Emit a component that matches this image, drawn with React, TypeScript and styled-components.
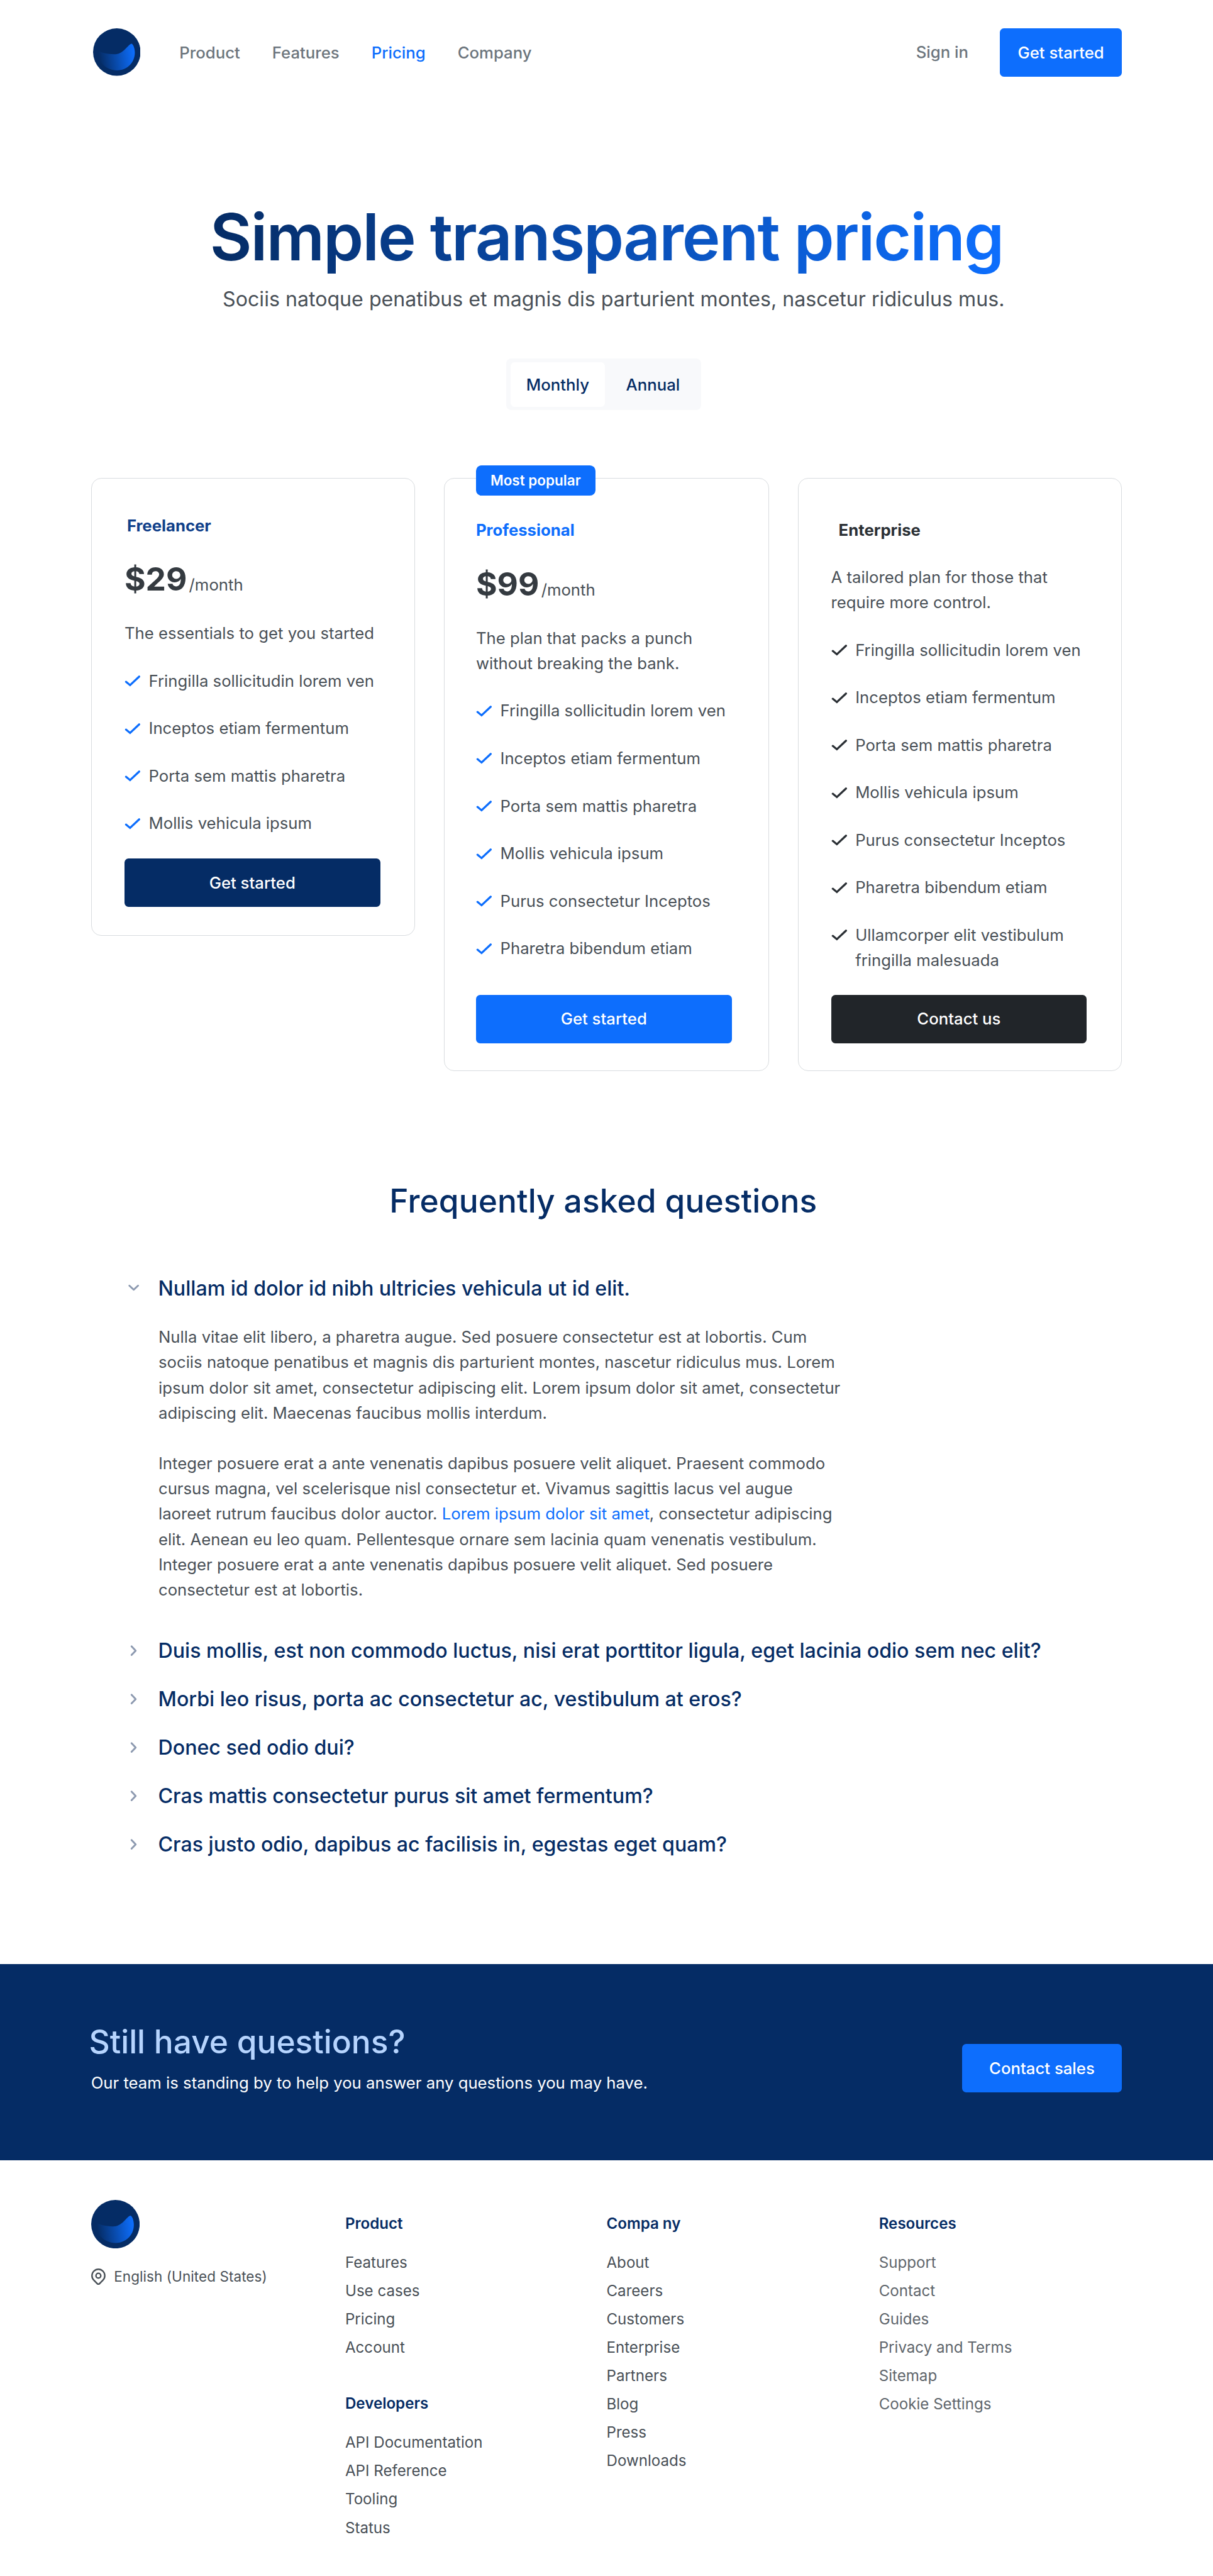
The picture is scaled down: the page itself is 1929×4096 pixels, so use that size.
import React, { useId, useState } from 'react';
import styled, { createGlobalStyle, css } from 'styled-components';

const color = {
  navy: '#052c65',
  navySoft: '#10408a',
  blue: '#0d6efd',
  sky: '#b6d4fe',
  ink: '#212529',
  graphite: '#343a40',
  text: '#495057',
  nav: '#6c757d',
  faint: '#60666c',
  chevron: '#8d9ab0',
  line: '#d9dcdf',
  pale: '#f8f9fb',
  white: '#ffffff',
};

const GlobalStyle = createGlobalStyle`
  *, *::before, *::after { box-sizing: border-box; }
  html { font-size: 8.0375px; }
  body {
    margin: 0;
    background: ${color.white};
    color: ${color.text};
    font-family: Inter, "Liberation Sans", sans-serif;
    font-size: 3.2rem;
    line-height: 5rem;
  }
  h1, h2, h3, p, ul { margin: 0; padding: 0; font-weight: 400; }
  ul { list-style: none; }
  a { color: inherit; text-decoration: none; }
  button { font: inherit; border: 0; padding: 0; margin: 0; background: none; color: inherit; cursor: pointer; }
  svg { display: block; flex: none; }
`;

const Page = styled.div`
  width: 240rem;
  min-height: 509.6rem;
  display: flex;
  flex-direction: column;
`;

/* ---------- shared ---------- */

type Tone = 'blue' | 'navy' | 'dark';

const toneColor: Record<Tone, string> = {
  blue: color.blue,
  navy: color.navy,
  dark: color.ink,
};

const Button = styled.a<{ $tone?: Tone; $width: string }>`
  display: flex;
  align-items: center;
  justify-content: center;
  flex: none;
  width: ${(p) => p.$width};
  height: 9.6rem;
  padding-top: 0.1rem;
  border-radius: 0.8rem;
  background: ${(p) => toneColor[p.$tone ?? 'blue']};
  color: ${color.white};
  font-weight: 500;
  white-space: nowrap;
`;

const LogoSvg = styled.svg<{ $size: string }>`
  width: ${(p) => p.$size};
  height: ${(p) => p.$size};
`;

function Logo({ size }: { size: string }) {
  const id = useId();
  return (
    <LogoSvg $size={size} viewBox="42 48 282 282" aria-label="Home">
      <defs>
        <linearGradient id={id} gradientUnits="userSpaceOnUse" x1="78" y1="222" x2="286" y2="192">
          <stop offset="0" stopColor={color.navy} />
          <stop offset="1" stopColor={color.blue} />
        </linearGradient>
      </defs>
      <circle cx="183" cy="189" r="141" fill={color.navy} />
      <path
        fill={`url(#${id})`}
        d="M64 180 C90 192 125 202 168 202 C222 202 240 154 267 140 C279 137 290 166 290 192 C290 252 244 298 184 298 C120 298 68 250 64 180 Z"
      />
    </LogoSvg>
  );
}

/* ---------- header ---------- */

const Header = styled.header`
  display: flex;
  align-items: flex-start;
  padding: 5.6rem 18rem 5.6rem 18.4rem;
  height: 20.8rem;
`;

const Nav = styled.nav`
  display: flex;
  align-items: center;
  gap: 6.35rem;
  height: 9.6rem;
  margin-left: 7.7rem;
  padding-top: 0.15rem;
`;

const NavLink = styled.a<{ $active?: boolean }>`
  font-weight: 500;
  color: ${(p) => (p.$active ? color.blue : color.nav)};
`;

const Account = styled.div`
  display: flex;
  align-items: center;
  gap: 6.2rem;
  margin-left: auto;
`;

/* ---------- hero ---------- */

const Hero = styled.section`
  display: flex;
  flex-direction: column;
  align-items: center;
  padding-top: 18.6rem;
`;

const HeroTitle = styled.h1`
  font-size: 12.8rem;
  line-height: 15rem;
  font-weight: 600;
  letter-spacing: -0.02em;
  white-space: nowrap;
  background: linear-gradient(90deg, ${color.navy}, ${color.blue});
  -webkit-background-clip: text;
  background-clip: text;
  color: transparent;
`;

const HeroText = styled.p`
  margin-top: 1.9rem;
  padding-left: 2.8rem;
  font-size: 4rem;
  line-height: 6rem;
  white-space: nowrap;
`;

const Toggle = styled.div`
  display: flex;
  width: 38.6rem;
  height: 10.2rem;
  margin: 8.6rem 1.2rem 0 0;
  padding: 0.8rem 0 0.6rem 0.9rem;
  border-radius: 1rem;
  background: ${color.pale};
`;

const ToggleOption = styled.button<{ $on: boolean; $width: string }>`
  width: ${(p) => p.$width};
  height: 8.8rem;
  border-radius: 0.8rem;
  background: ${(p) => (p.$on ? color.white : 'transparent')};
  color: ${color.navy};
  font-weight: 500;
`;

/* ---------- plans ---------- */

const Plans = styled.section`
  display: flex;
  align-items: flex-start;
  justify-content: space-between;
  padding: 13.5rem 18rem 0;
`;

const Card = styled.article<{ $tall?: boolean; $wide?: boolean }>`
  position: relative;
  display: flex;
  flex-direction: column;
  width: ${(p) => (p.$wide ? '64.3rem' : '64.1rem')};
  height: ${(p) => (p.$tall ? '117.3rem' : '90.6rem')};
  padding: ${(p) => (p.$tall ? '7.7rem 0 5.4rem' : '6.75rem 0 5.6rem')};
  padding-left: ${(p) => (p.$wide ? '6.2rem' : p.$tall ? '6.4rem' : '6.5rem')};
  border: 0.18rem solid ${color.line};
  border-radius: 2rem;
`;

const Badge = styled.span`
  position: absolute;
  top: -2.7rem;
  left: 6.2rem;
  display: flex;
  align-items: center;
  justify-content: center;
  width: 23.6rem;
  height: 6rem;
  border-radius: 1.1rem;
  background: ${color.blue};
  color: ${color.white};
  font-size: 2.8rem;
  font-weight: 600;
`;

const PlanName = styled.h3<{ $color: string; $indent?: string }>`
  padding-left: ${(p) => p.$indent ?? '0'};
  color: ${(p) => p.$color};
  font-weight: 700;
  font-size: 3.2rem;
  line-height: 5rem;
`;

const Price = styled.div`
  display: flex;
  align-items: baseline;
  gap: 0.4rem;
  height: 8rem;
  margin-top: 4.05rem;
`;

const Amount = styled.strong`
  color: ${color.graphite};
  font-size: 6.4rem;
  line-height: 8rem;
  font-weight: 700;
`;

const PlanText = styled.p`
  width: 50.6rem;
  margin-top: 4.3rem;
`;

const FeatureList = styled.ul`
  display: flex;
  flex-direction: column;
  gap: 4.4rem;
  width: 50.6rem;
  margin-top: 4.4rem;
`;

const Feature = styled.li`
  display: flex;
  align-items: flex-start;
  gap: 1.6rem;
`;

const CheckSvg = styled.svg<{ $color: string }>`
  width: 3.2rem;
  height: 2.4rem;
  margin-top: 1.3rem;
  fill: none;
  stroke: ${(p) => p.$color};
  stroke-width: 4;
  stroke-linecap: round;
  stroke-linejoin: miter;
`;

const CardAction = styled.div`
  margin-top: auto;
`;

/* ---------- faq ---------- */

const Faq = styled.section`
  display: flex;
  flex-direction: column;
  padding: 21.6rem 0 21.1rem;
`;

const FaqTitle = styled.h2`
  padding-right: 1.3rem;
  text-align: center;
  color: ${color.navy};
  font-size: 6.4rem;
  line-height: 8rem;
  font-weight: 500;
  letter-spacing: 0.002em;
`;

const Questions = styled.div`
  display: flex;
  flex-direction: column;
  gap: 4.6rem;
  margin-top: 10.9rem;
  padding-left: 25.2rem;
`;

const Question = styled.button`
  display: flex;
  align-items: center;
  gap: 3.7rem;
  color: ${color.navy};
  font-size: 4rem;
  line-height: 5rem;
  font-weight: 500;
  text-align: left;
  white-space: nowrap;
`;

const ChevronSvg = styled.svg<{ $open: boolean }>`
  width: 2.4rem;
  height: 2.4rem;
  margin-bottom: 0.2rem;
  fill: none;
  stroke: ${color.chevron};
  stroke-width: 3.6;
  stroke-linecap: round;
  stroke-linejoin: round;
  ${(p) =>
    p.$open &&
    css`
      transform: rotate(90deg);
    `}
`;

const Answer = styled.div`
  display: flex;
  flex-direction: column;
  gap: 5rem;
  width: 136.5rem;
  margin: 4.65rem 0 2.45rem 6.15rem;
`;

const InlineLink = styled.a`
  color: ${color.blue};
`;

/* ---------- call to action ---------- */

const Cta = styled.section`
  display: flex;
  justify-content: space-between;
  align-items: flex-start;
  height: 38.8rem;
  padding: 11.25rem 18.1rem 0 17.6rem;
  background: ${color.navy};
`;

const CtaTitle = styled.h2`
  color: ${color.sky};
  font-size: 6.4rem;
  line-height: 8rem;
  font-weight: 500;
`;

const CtaText = styled.p`
  margin-top: 1.8rem;
  padding-left: 0.4rem;
  color: ${color.white};
`;

const CtaAction = styled.div`
  margin-top: 4.55rem;
`;

/* ---------- footer ---------- */

const Footer = styled.footer`
  display: grid;
  grid-template-columns: 50.3rem 51.7rem 53.9rem 1fr;
  padding: 7.8rem 18rem 0;
  font-size: 3rem;
`;

const Brand = styled.div`
  display: flex;
  flex-direction: column;
`;

const Locale = styled.div`
  display: flex;
  align-items: center;
  gap: 1.7rem;
  height: 5rem;
  margin-top: 3.15rem;
  font-size: 2.8rem;
  letter-spacing: 0.003em;
`;

const PinSvg = styled.svg`
  width: 2.85rem;
  height: 3.25rem;
  fill: none;
  stroke: ${color.text};
  stroke-width: 1.9;
  stroke-linecap: round;
  stroke-linejoin: round;
`;

const FooterColumn = styled.div<{ $faint?: boolean }>`
  display: flex;
  flex-direction: column;
  gap: 5.8rem;
  margin-top: 2.25rem;
  color: ${(p) => (p.$faint ? color.faint : color.text)};
`;

const FooterHeading = styled.h3`
  margin-bottom: 2.4rem;
  color: ${color.navy};
  font-size: 3rem;
  line-height: 5rem;
  font-weight: 600;
`;

const FooterItem = styled.li`
  line-height: 5.6rem;
`;

/* ---------- data ---------- */

const features = [
  'Fringilla sollicitudin lorem ven',
  'Inceptos etiam fermentum',
  'Porta sem mattis pharetra',
  'Mollis vehicula ipsum',
  'Purus consectetur Inceptos',
  'Pharetra bibendum etiam',
  'Ullamcorper elit vestibulum fringilla malesuada',
];

interface Plan {
  name: string;
  nameColor: string;
  indent?: string;
  price?: string;
  text: string;
  count: number;
  action: string;
  tone: Tone;
  check: string;
  tall?: boolean;
  popular?: boolean;
}

const plans: Plan[] = [
  {
    name: 'Freelancer',
    nameColor: color.navySoft,
    indent: '0.5rem',
    price: '$29',
    text: 'The essentials to get you started',
    count: 4,
    action: 'Get started',
    tone: 'navy',
    check: color.blue,
  },
  {
    name: 'Professional',
    nameColor: color.blue,
    price: '$99',
    text: 'The plan that packs a punch without breaking the bank.',
    count: 6,
    action: 'Get started',
    tone: 'blue',
    check: color.blue,
    tall: true,
    popular: true,
  },
  {
    name: 'Enterprise',
    nameColor: '#2b3035',
    indent: '1.5rem',
    text: 'A tailored plan for those that require more control.',
    count: 7,
    action: 'Contact us',
    tone: 'dark',
    check: '#2b3035',
    tall: true,
  },
];

const questions = [
  'Nullam id dolor id nibh ultricies vehicula ut id elit.',
  'Duis mollis, est non commodo luctus, nisi erat porttitor ligula, eget lacinia odio sem nec elit?',
  'Morbi leo risus, porta ac consectetur ac, vestibulum at eros?',
  'Donec sed odio dui?',
  'Cras mattis consectetur purus sit amet fermentum?',
  'Cras justo odio, dapibus ac facilisis in, egestas eget quam?',
];

interface LinkGroup {
  title: string;
  links: string[];
}

const footerColumns: LinkGroup[][] = [
  [
    { title: 'Product', links: ['Features', 'Use cases', 'Pricing', 'Account'] },
    { title: 'Developers', links: ['API Documentation', 'API Reference', 'Tooling', 'Status'] },
  ],
  [
    {
      title: 'Compa ny',
      links: ['About', 'Careers', 'Customers', 'Enterprise', 'Partners', 'Blog', 'Press', 'Downloads'],
    },
  ],
  [
    {
      title: 'Resources',
      links: ['Support', 'Contact', 'Guides', 'Privacy and Terms', 'Sitemap', 'Cookie Settings'],
    },
  ],
];

/* ---------- components ---------- */

function PlanCard({ plan }: { plan: Plan }) {
  return (
    <Card $tall={plan.tall} $wide={plan.popular}>
      {plan.popular && <Badge>Most popular</Badge>}
      <PlanName $color={plan.nameColor} $indent={plan.indent}>
        {plan.name}
      </PlanName>
      {plan.price && (
        <Price>
          <Amount>{plan.price}</Amount>
          <span>/month</span>
        </Price>
      )}
      <PlanText>{plan.text}</PlanText>
      <FeatureList>
        {features.slice(0, plan.count).map((label) => (
          <Feature key={label}>
            <CheckSvg $color={plan.check} viewBox="0 0 32 24">
              <path d="M2.9 13.8 L11 20.4 L29.1 3.4" />
            </CheckSvg>
            <span>{label}</span>
          </Feature>
        ))}
      </FeatureList>
      <CardAction>
        <Button href="#" $tone={plan.tone} $width="50.6rem">
          {plan.action}
        </Button>
      </CardAction>
    </Card>
  );
}

function FirstAnswer() {
  return (
    <Answer>
      <p>
        Nulla vitae elit libero, a pharetra augue. Sed posuere consectetur est at lobortis. Cum sociis natoque
        penatibus et magnis dis parturient montes, nascetur ridiculus mus. Lorem ipsum dolor sit amet, consectetur
        adipiscing elit. Lorem ipsum dolor sit amet, consectetur adipiscing elit. Maecenas faucibus mollis interdum.
      </p>
      <p>
        Integer posuere erat a ante venenatis dapibus posuere velit aliquet. Praesent commodo cursus magna, vel
        scelerisque nisl consectetur et. Vivamus sagittis lacus vel augue laoreet rutrum faucibus dolor auctor.{' '}
        <InlineLink href="#">Lorem ipsum dolor sit amet</InlineLink>, consectetur adipiscing elit. Aenean eu leo quam.
        Pellentesque ornare sem lacinia quam venenatis vestibulum. Integer posuere erat a ante venenatis dapibus
        posuere velit aliquet. Sed posuere consectetur est at lobortis.
      </p>
    </Answer>
  );
}

export default function App() {
  const [period, setPeriod] = useState<'Monthly' | 'Annual'>('Monthly');
  const [open, setOpen] = useState(true);

  return (
    <>
      <GlobalStyle />
      <Page>
        <Header>
          <Logo size="9.4rem" />
          <Nav>
            {['Product', 'Features', 'Pricing', 'Company'].map((label) => (
              <NavLink key={label} href="#" $active={label === 'Pricing'}>
                {label}
              </NavLink>
            ))}
          </Nav>
          <Account>
            <NavLink href="#">Sign in</NavLink>
            <Button href="#" $width="24.2rem">
              Get started
            </Button>
          </Account>
        </Header>

        <Hero>
          <HeroTitle>Simple transparent pricing</HeroTitle>
          <HeroText>Sociis natoque penatibus et magnis dis parturient montes, nascetur ridiculus mus.</HeroText>
          <Toggle>
            <ToggleOption $on={period === 'Monthly'} $width="18.7rem" onClick={() => setPeriod('Monthly')}>
              Monthly
            </ToggleOption>
            <ToggleOption $on={period === 'Annual'} $width="19rem" onClick={() => setPeriod('Annual')}>
              Annual
            </ToggleOption>
          </Toggle>
        </Hero>

        <Plans>
          {plans.map((plan) => (
            <PlanCard key={plan.name} plan={plan} />
          ))}
        </Plans>

        <Faq>
          <FaqTitle>Frequently asked questions</FaqTitle>
          <Questions>
            {questions.map((question, index) => {
              const expanded = index === 0 && open;
              return (
                <div key={question}>
                  <Question onClick={() => index === 0 && setOpen(!open)}>
                    <ChevronSvg $open={expanded} viewBox="0 0 24 24">
                      <path d="M7.7 3.4 L15.9 12 L7.7 20.6" />
                    </ChevronSvg>
                    {question}
                  </Question>
                  {expanded && <FirstAnswer />}
                </div>
              );
            })}
          </Questions>
        </Faq>

        <Cta>
          <div>
            <CtaTitle>Still have questions?</CtaTitle>
            <CtaText>Our team is standing by to help you answer any questions you may have.</CtaText>
          </div>
          <CtaAction>
            <Button href="#" $width="31.5rem">
              Contact sales
            </Button>
          </CtaAction>
        </Cta>

        <Footer>
          <Brand>
            <Logo size="9.6rem" />
            <Locale>
              <PinSvg viewBox="3 2 18 20.5">
                <path d="M17.657 16.657 13.414 20.9a2 2 0 0 1-2.828 0l-4.243-4.243a8 8 0 1 1 11.314 0z" />
                <circle cx="12" cy="11" r="3" />
              </PinSvg>
              English (United States)
            </Locale>
          </Brand>
          {footerColumns.map((groups, index) => (
            <FooterColumn key={groups[0].title} $faint={index === 2}>
              {groups.map((group) => (
                <div key={group.title}>
                  <FooterHeading>{group.title}</FooterHeading>
                  <ul>
                    {group.links.map((link) => (
                      <FooterItem key={link}>
                        <a href="#">{link}</a>
                      </FooterItem>
                    ))}
                  </ul>
                </div>
              ))}
            </FooterColumn>
          ))}
        </Footer>
      </Page>
    </>
  );
}
